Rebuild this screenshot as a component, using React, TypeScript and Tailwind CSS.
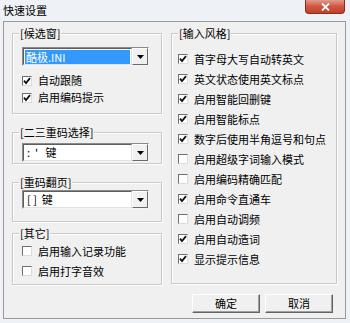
import React from 'react';

type CheckProps = { checked?: boolean; label: string; h?: string };

const Check: React.FC<CheckProps> = ({ checked, label, h = 'h-[20px]' }) => (
  <div className={`flex items-center ${h}`}>
    <span className="w-[10px] h-[10px] shrink-0 bg-white border border-t-[#6f6f6f] border-l-[#6f6f6f] border-r-[#dcdcdc] border-b-[#dcdcdc] flex items-center justify-center">
      {checked && (
        <svg width="8" height="8" viewBox="0 0 8 8">
          <path d="M1 3.6 L3 6 L7 1.2" stroke="#111" strokeWidth="1.8" fill="none" />
        </svg>
      )}
    </span>
    <span className="ml-[6px] whitespace-nowrap">{label}</span>
  </div>
);

const Group: React.FC<{ title: string; className?: string; children?: React.ReactNode }> = ({ title, className = '', children }) => (
  <div className={`relative border border-[#c9c9c9] shadow-[inset_1px_1px_0_#ffffff,1px_1px_0_#ffffff] ${className}`}>
    <span className="absolute left-[6px] -top-[8px] bg-[#f0f0f0] px-[1px] leading-[14px] whitespace-nowrap">{title}</span>
    {children}
  </div>
);

const Combo: React.FC<{ children: React.ReactNode }> = ({ children }) => (
  <div className="w-[127px] h-[19px] flex border border-t-[#8a8a8a] border-l-[#8a8a8a] border-r-[#f4f4f4] border-b-[#f4f4f4] bg-white">
    <div className="flex-1 flex items-center px-[1px] border border-t-[#5e5e5e] border-l-[#5e5e5e] border-r-[#e2e2e2] border-b-[#e2e2e2]">
      {children}
    </div>
    <div className="w-[16px] flex items-center justify-center bg-[#f0f0f0] border border-t-[#ffffff] border-l-[#ffffff] border-r-[#6a6a6a] border-b-[#6a6a6a]">
      <svg width="7" height="4" viewBox="0 0 7 4">
        <path d="M0 0 H7 L3.5 4 Z" fill="#000" />
      </svg>
    </div>
  </div>
);

const Btn: React.FC<{ label: string }> = ({ label }) => (
  <button className="w-[68px] h-[19px] flex items-center justify-center bg-[#f0f0f0] border border-t-[#ffffff] border-l-[#ffffff] border-r-[#646464] border-b-[#646464] shadow-[inset_-1px_-1px_0_#a0a0a0]">
    {label}
  </button>
);

const styleItems: [string, boolean][] = [
  ['首字母大写自动转英文', true],
  ['英文状态使用英文标点', true],
  ['启用智能回删键', true],
  ['启用智能标点', true],
  ['数字后使用半角逗号和句点', true],
  ['启用超级字词输入模式', false],
  ['启用编码精确匹配', false],
  ['启用命令直通车', true],
  ['启用自动调频', false],
  ['启用自动造词', true],
  ['显示提示信息', true],
];

export default function App() {
  return (
    <div className="w-[350px] h-[323px] flex flex-col bg-[#eef1f5] text-[11px] text-black font-['Noto_Sans_CJK_SC',sans-serif] overflow-hidden">
      {/* title bar */}
      <div className="h-[21px] flex items-start justify-between pl-[3px] pr-[5px]">
        <span className="leading-[20px] text-[11px]">快速设置</span>
        <div className="w-[40px] h-[14px] rounded-b-[4px] border border-t-0 border-[#8c2d22] bg-gradient-to-b from-[#e29a8c] via-[#d0553f] to-[#c2402b] flex items-center justify-center">
          <svg width="9" height="8" viewBox="0 0 9 8">
            <path d="M1 0.5 L8 7.5 M8 0.5 L1 7.5" stroke="#ffffff" strokeWidth="1.8" />
          </svg>
        </div>
      </div>

      {/* client area */}
      <div className="ml-[3px] mr-[4px] h-[298px] border border-[#9a9a9a] bg-[#f0f0f0] flex px-[8px] gap-[9px]">
        {/* left column */}
        <div className="w-[150px] flex flex-col pt-[11px]">
          <Group title="[候选窗]" className="h-[81px] pt-[13px] pl-[9px]">
            <Combo>
              <span className="h-[14px] w-full bg-[#3399ff] text-white leading-[14px] pl-[1px]">酷极.INI</span>
            </Combo>
            <div className="mt-[6px]">
              <Check checked label="自动跟随" h="h-[17px]" />
              <Check checked label="启用编码提示" h="h-[17px]" />
            </div>
          </Group>
          <Group title="[二三重码选择]" className="mt-[18px] h-[32px] pt-[10px] pl-[9px]">
            <Combo>
              <span className="whitespace-pre pl-[2px]">{":  '   键"}</span>
            </Combo>
          </Group>
          <Group title="[重码翻页]" className="mt-[18px] h-[40px] pt-[7px] pl-[9px]">
            <Combo>
              <span className="whitespace-pre pl-[2px]">{'[ ]  键'}</span>
            </Combo>
          </Group>
          <Group title="[其它]" className="mt-[11px] h-[52px] pt-[7px] pl-[9px]">
            <Check label="启用输入记录功能" />
            <Check label="启用打字音效" />
          </Group>
        </div>

        {/* right column */}
        <div className="w-[166px] flex flex-col pt-[11px]">
          <Group title="[输入风格]" className="h-[251px] pt-[15px] pl-[6px]">
            {styleItems.map(([label, checked]) => (
              <Check key={label} label={label} checked={checked} />
            ))}
          </Group>
          <div className="mt-[10px] flex justify-end gap-[5px] pr-[4px]">
            <Btn label="确定" />
            <Btn label="取消" />
          </div>
        </div>
      </div>
    </div>
  );
}
